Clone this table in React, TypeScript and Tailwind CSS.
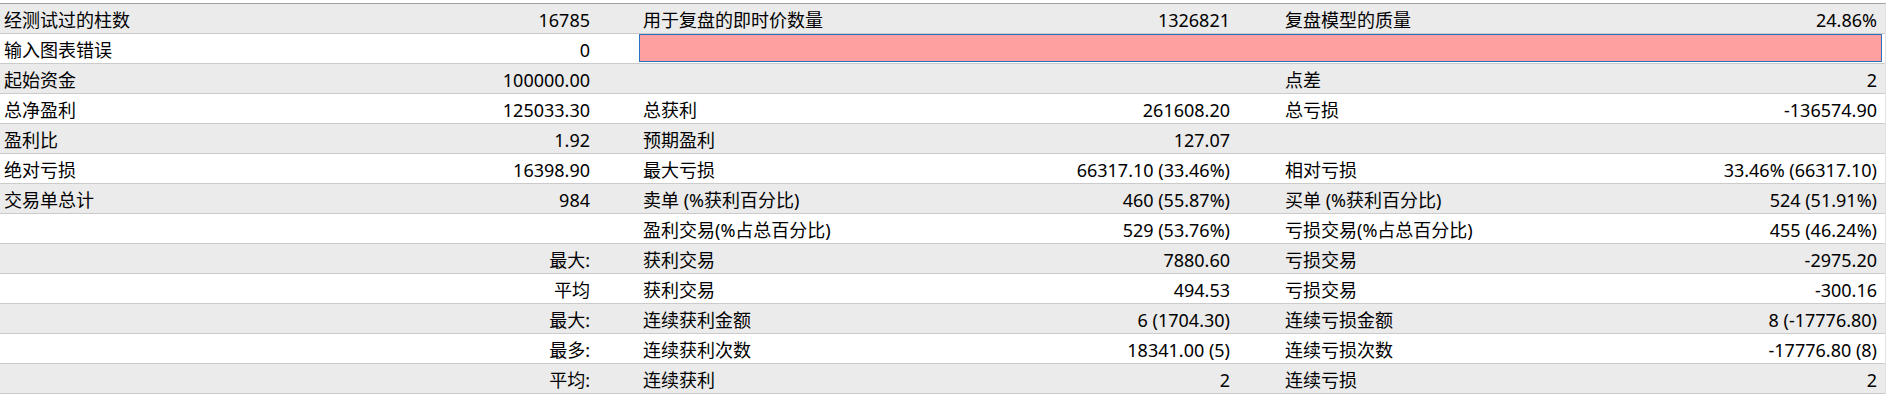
type Cell = [string, string]

interface RowData {
  a: Cell
  b?: Cell
  c?: Cell
  error?: boolean
}

const rows: RowData[] = [
  { a: ['经测试过的柱数', '16785'], b: ['用于复盘的即时价数量', '1326821'], c: ['复盘模型的质量', '24.86%'] },
  { a: ['输入图表错误', '0'], error: true },
  { a: ['起始资金', '100000.00'], b: ['', ''], c: ['点差', '2'] },
  { a: ['总净盈利', '125033.30'], b: ['总获利', '261608.20'], c: ['总亏损', '-136574.90'] },
  { a: ['盈利比', '1.92'], b: ['预期盈利', '127.07'], c: ['', ''] },
  { a: ['绝对亏损', '16398.90'], b: ['最大亏损', '66317.10 (33.46%)'], c: ['相对亏损', '33.46% (66317.10)'] },
  { a: ['交易单总计', '984'], b: ['卖单 (%获利百分比)', '460 (55.87%)'], c: ['买单 (%获利百分比)', '524 (51.91%)'] },
  { a: ['', ''], b: ['盈利交易(%占总百分比)', '529 (53.76%)'], c: ['亏损交易(%占总百分比)', '455 (46.24%)'] },
  { a: ['', '最大:'], b: ['获利交易', '7880.60'], c: ['亏损交易', '-2975.20'] },
  { a: ['', '平均'], b: ['获利交易', '494.53'], c: ['亏损交易', '-300.16'] },
  { a: ['', '最大:'], b: ['连续获利金额', '6 (1704.30)'], c: ['连续亏损金额', '8 (-17776.80)'] },
  { a: ['', '最多:'], b: ['连续获利次数', '18341.00 (5)'], c: ['连续亏损次数', '-17776.80 (8)'] },
  { a: ['', '平均:'], b: ['连续获利', '2'], c: ['连续亏损', '2'] },
]

function Pair({ cell, className }: { cell?: Cell; className: string }) {
  return (
    <div className={`flex items-center justify-between ${className}`}>
      <span>{cell?.[0]}</span>
      <span>{cell?.[1]}</span>
    </div>
  )
}

export default function App() {
  return (
    <div
      className="w-[1891px] h-[410px] bg-white pt-[3px] text-[18px] text-black"
      style={{ fontFamily: '"Noto Sans", "Noto Sans CJK SC", sans-serif' }}
    >
      <div className="w-[1886px] border-t border-[#a0a0a0] border-r border-r-[#e2e2e2]">
        {rows.map((row, i) => (
          <div
            key={i}
            className={`flex h-[30px] border-b border-[#cbcbcb] leading-none ${
              i % 2 === 0 ? 'bg-[#ebebeb]' : 'bg-white'
            }`}
          >
            <Pair cell={row.a} className="w-[594px] pl-[4px] pr-[4px] pt-[2px]" />
            <div className="w-[45px]" />
            {row.error ? (
              <div className="flex-1 pr-[3px]">
                <div className="h-[28px] border border-[#2a72c0] bg-[#ffa0a0]" />
              </div>
            ) : (
              <>
                <Pair cell={row.b} className="w-[595px] pl-[4px] pr-[4px] pt-[2px]" />
                <div className="w-[47px]" />
                <Pair cell={row.c} className="flex-1 pl-[4px] pr-[8px] pt-[2px]" />
              </>
            )}
          </div>
        ))}
      </div>
    </div>
  )
}
